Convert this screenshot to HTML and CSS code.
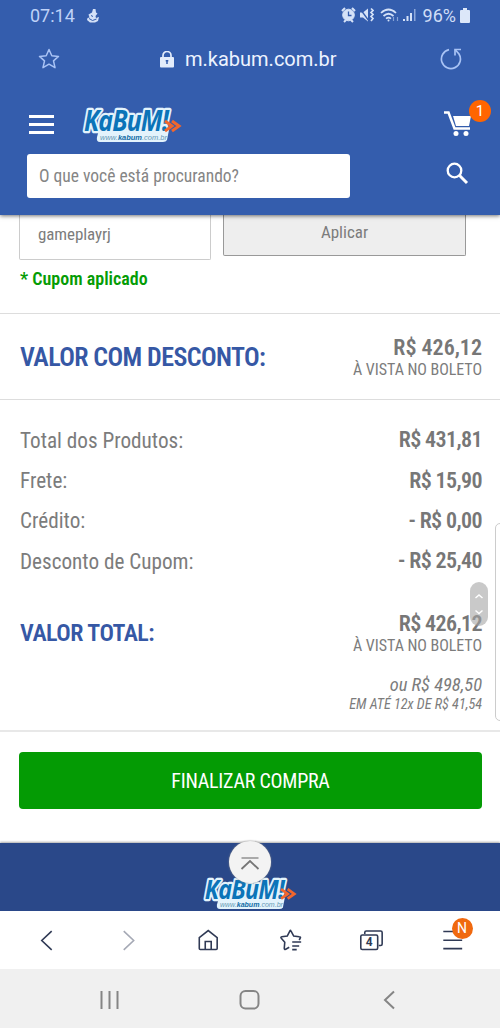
FILE: index.html
```html
<!DOCTYPE html>
<html lang="pt-BR">
<head>
<meta charset="utf-8">
<meta name="viewport" content="width=device-width">
<title>KaBuM! - Carrinho</title>
<link rel="stylesheet" href="styles.css">
</head>
<body>
<div class="phone">
  <header class="top">
    <div class="status">
      <span class="clock t">07:14</span>
      <svg class="anchor" width="14" height="15" viewBox="0 0 14 15"><path d="M7 1h2.500l.5 3.500 1.500 1L9.500 8l.5 2 3-1-1 4-3 1.500H4L1 12l.5-2 2-.5-1-3L6 4.500z" fill="#d3e0f7"/><path d="M3 10.500l3.500 2 4-1.500M5 7.500l2 1" stroke="#345dad" fill="none"/></svg>
      <div class="status-right">
        <svg width="33" height="16" viewBox="0 0 33 16" fill="none" stroke="#d5e2f8">
          <path d="M1 4l3-3M14 4l-3-3M3 15l2-2M12 15l-2-2" stroke-width="2"/><circle cx="7.500" cy="8" r="5.800" fill="#d5e2f8"/><path d="M7.500 4.500V8.500H10.500" stroke="#345dad" stroke-width="1.300"/>
          <path d="M19 5.500h3l5-4v13l-5-4h-3z" fill="#d5e2f8" stroke="none"/><path d="M18.500 1l9.500 13" stroke="#345dad" stroke-width="1.300"/><path d="M30 1.500l2 2-2 2 2 2-2 2 2 2-2 2.500" stroke-width="1.700"/>
        </svg>
        <svg class="wifi" width="20" height="15" viewBox="0 0 20 15" fill="none" stroke="#d5e2f8" stroke-width="1.700"><path d="M1 5q7.500-7 15 0M3.500 8q5-4.500 10 0M6 10.700q2.500-2 5 0"/><circle cx="8.500" cy="12.500" r="1" fill="#d5e2f8" stroke="none"/><path d="M13.500 9v4M17.500 13V9" stroke="#86a2d6" stroke-width="1.200"/></svg>
        <svg class="signal" width="14" height="14" viewBox="0 0 14 14" fill="#d5e2f8"><path d="M0 11h2v2H0zM3.500 8h2v5h-2zM7 5h2v8H7z"/><path d="M11 1h1.500v12H11z" fill="#8da8da"/></svg>
        <span class="battery-text t">96%</span>
        <svg class="battery" width="10" height="15" viewBox="0 0 10 15"><path d="M3 0h4v2h2q1 0 1 1v11q0 1-1 1H1q-1 0-1-1V3q0-1 1-1h2z" fill="#dce7f9"/></svg>
      </div>
    </div>
    <div class="address">
      <svg class="fav" width="22" height="22" viewBox="0 0 22 22"><path d="M11 1.500l2.800 6.200 6.700.7-5 4.500 1.500 6.800-6-3.500-6 3.500 1.500-6.800-5-4.500 6.700-.7z" fill="none" stroke="#a9c3f5" stroke-width="1.500" stroke-linejoin="round"/></svg>
      <svg class="lock" width="14" height="17" viewBox="0 0 14 17"><rect y="6" width="14" height="10.500" rx="1" fill="#e3ecfb"/><path d="M3 7V4.500a4 4 0 018 0V7" fill="none" stroke="#e3ecfb" stroke-width="1.700"/><path d="M7 9v4M5.700 9.700h2.600" stroke="#345dad" stroke-width="1.500"/></svg>
      <span class="url t">m.kabum.com.br</span>
      <svg class="reload" width="22" height="22" viewBox="0 0 22 22" fill="none" stroke="#a9c3f5" stroke-width="1.700"><path d="M9 1.700A9.500 9.500 0 1 0 19 6L15.500 2"/><path d="M21 1.500h-6v6"/></svg>
    </div>
    <div class="brand">
      <svg class="menu" width="25" height="20" viewBox="0 0 25 20" fill="#fff"><path d="M0 0h25v3H0zM0 8h25v3H0zM0 16h25v3H0z"/></svg>
      <svg class="logo" width="102" height="38" viewBox="0 0 102 38">
        <path d="M18 25H88L86 35Q85 37 82 37H19Q15 37 16 32Z" fill="#e3f3fc"/>
        <text class="logo-name" x="3" y="26" textLength="84" lengthAdjust="spacingAndGlyphs">KaBuM!</text>
        <path class="arrow" d="M84 16l7 5-7 5M91 16l7 5-7 5"/>
        <text class="logo-url" x="19" y="34.500" textLength="67" lengthAdjust="spacingAndGlyphs">www.<tspan class="logo-url-bold">kabum</tspan>.com.br</text>
      </svg>
      <div class="cart">
        <svg width="28" height="26" viewBox="0 0 28 26"><path d="M0 1.500h4.500l6 16H26" fill="none" stroke="#fff" stroke-width="2.500"/><path d="M9 5H27l-2 10H12z" fill="#fff"/><circle cx="12" cy="22.500" r="2.500" fill="#fff"/><circle cx="22" cy="22.500" r="2.500" fill="#fff"/></svg>
        <span class="cart-badge">1</span>
      </div>
    </div>
    <div class="search">
      <div class="search-box"><span class="t">O que você está procurando?</span></div>
      <svg class="search-icon" width="23" height="23" viewBox="0 0 23 23" fill="none" stroke="#fff"><circle cx="8.500" cy="8.500" r="6.800" stroke-width="2.300"/><path d="M13.300 13.300l7.700 7.700" stroke-width="3"/></svg>
    </div>
  </header>
  <main>
    <section class="coupon">
      <div class="coupon-form">
        <div class="coupon-input"><span class="t">gameplayrj</span></div>
        <div class="coupon-button"><span class="t">Aplicar</span></div>
      </div>
      <p class="coupon-note"><span class="t">* Cupom aplicado</span></p>
    </section>
    <section class="discount">
      <h2 class="discount-title t">VALOR COM DESCONTO:</h2>
      <div class="amount">
        <strong class="price main-price t">R$ 426,12</strong>
        <span class="terms t">À VISTA NO BOLETO</span>
      </div>
    </section>
    <section class="summary">
      <div class="row"><span class="t">Total dos Produtos:</span><strong class="price t">R$ 431,81</strong></div>
      <div class="row"><span class="t">Frete:</span><strong class="price t">R$ 15,90</strong></div>
      <div class="row"><span class="t">Crédito:</span><strong class="price t">- R$ 0,00</strong></div>
      <div class="row"><span class="t">Desconto de Cupom:</span><strong class="price t">- R$ 25,40</strong></div>
      <div class="total">
        <h2 class="total-title t">VALOR TOTAL:</h2>
        <div class="amount">
          <strong class="price t">R$ 426,12</strong>
          <span class="terms t">À VISTA NO BOLETO</span>
        </div>
      </div>
      <div class="installments">
        <em class="inst-total t">ou R$ 498,50</em>
        <em class="inst-terms t">EM ATÉ 12x DE R$ 41,54</em>
      </div>
    </section>
    <div class="checkout"><div class="checkout-button"><span class="t">FINALIZAR COMPRA</span></div></div>
  </main>
  <footer class="footer">
    <svg width="96" height="36" viewBox="0 0 102 38" preserveAspectRatio="none">
      <path d="M18 25H88L86 35Q85 37 82 37H19Q15 37 16 32Z" fill="#e3f3fc"/>
      <text class="logo-name" x="3" y="26" textLength="84" lengthAdjust="spacingAndGlyphs">KaBuM!</text>
      <path class="arrow" d="M84 16l7 5-7 5M91 16l7 5-7 5"/>
      <text class="logo-url" x="19" y="34.500" textLength="67" lengthAdjust="spacingAndGlyphs">www.<tspan class="logo-url-bold">kabum</tspan>.com.br</text>
    </svg>
  </footer>
  <nav class="toolbar">
    <svg width="82" height="58" viewBox="0 0 82 58"><path d="M51 20l-10 9.500 10 9.500" /></svg>
    <svg class="dim" width="82" height="58" viewBox="0 0 82 58"><path d="M41 20l10 9.500-10 9.500"/></svg>
    <svg width="82" height="58" viewBox="0 0 82 58"><path d="M35.500 26.500L44.500 19.500l9 7v11q0 1-1 1h-16q-1 0-1-1zM41.500 38.500v-8h6v8"/></svg>
    <svg width="82" height="58" viewBox="0 0 82 58"><path d="M53.500 29l1-1.700q1-1.300-1-1.500l-5.500-.8-2.800-5.200q-.5-1-1 0L41.500 25l-5.500.8q-1.500.3-.5 1.500l3.500 4-.5 6q0 1.500 1.500 1l3.500-2M46.500 31h9M46.500 35h7M46.500 38.700h4.500"/></svg>
    <svg width="82" height="58" viewBox="0 0 82 58"><rect x="34" y="24" width="17" height="14.500" rx="1.500"/><path d="M38 23v-1.500q0-1.500 1.500-1.500h14.500q1.500 0 1.500 1.500V33q0 1.500-1.500 1.500h-2"/><text x="42.500" y="35.500" text-anchor="middle">4</text></svg>
    <div class="more">
      <svg width="82" height="58" viewBox="0 0 82 58"><path d="M34.500 20.500h19M34.500 29.200h19M34.500 37.700h19"/></svg>
      <span class="more-badge">N</span>
    </div>
  </nav>
  <nav class="system">
    <svg width="140" height="58" viewBox="0 0 140 58"><path d="M61.500 22v18M69.500 22v18M77.500 22v18"/></svg>
    <svg width="140" height="58" viewBox="0 0 140 58"><rect x="60.500" y="22" width="18" height="17.500" rx="5"/></svg>
    <svg width="140" height="58" viewBox="0 0 140 58"><path d="M74 22.500l-9 8.500 9 8.500"/></svg>
  </nav>
  <div class="edge-panel"></div>
  <svg class="scroll-handle" width="18" height="44" viewBox="0 0 18 44" fill="none" stroke="#fff" stroke-width="1.500"><path d="M5.500 16l3.500-3 3.500 3M5.500 28.500l3.500 3 3.500-3"/></svg>
  <svg class="to-top" width="42" height="42" viewBox="0 0 42 42" fill="none" stroke="#777" stroke-width="1.800"><path d="M12.500 17h17" stroke="#aaa"/><path d="M12.500 28l8.500-8 8.500 8"/></svg>
</div>
</body>
</html>
```
FILE: styles.css
```css
* { box-sizing: border-box; }
body { margin: 0; background: #fff; font-family: "Roboto Condensed", Roboto, sans-serif; font-stretch: condensed; color: #7c7c7c; }
h2, p { margin: 0; }
svg { display: block; flex: none; }
.t { display: block; white-space: nowrap; }
.phone { position: relative; width: 500px; height: 1028px; overflow: hidden; display: flex; flex-direction: column; }

.top { position: relative; z-index: 1; height: 215px; flex: none; background: #345dad; box-shadow: 0 1px 4px rgba(0,0,0,.55); font-stretch: normal; }
.status { height: 32px; display: flex; align-items: center; padding: 0 30px 2px; color: #bfd2f8; font-family: Roboto, sans-serif; font-size: 18px; }
.anchor { margin-left: 11px; }
.status-right { margin-left: auto; display: flex; align-items: center; }
.wifi { margin-left: 6px; }
.signal { margin-left: 3px; }
.battery-text { margin-left: 6px; color: #d0def7; }
.battery { margin-left: 4px; }
.address { height: 56px; display: flex; align-items: center; padding: 0 38px; font-family: Roboto, sans-serif; }
.fav, .reload { margin-bottom: 2px; }
.lock { margin-left: 100px; margin-bottom: 2px; }
.url { margin-left: 11px; color: #edf3ff; font-size: 20px; margin-bottom: 2px; }
.reload { margin-left: auto; }
.brand { height: 66px; display: flex; align-items: flex-start; padding: 17px 28px 0 29px; }
.menu { margin-top: 10px; }
.logo { margin-left: 27px; overflow: visible; }
.logo-name { font: italic 700 29px "Open Sans", sans-serif; letter-spacing: -1px; fill: #0b74b8; stroke: #e3f3fc; stroke-width: 4.5px; stroke-linejoin: round; paint-order: stroke; }
.logo-url { font: italic 8px "Liberation Sans", sans-serif; fill: #6699b5; }
.logo-url-bold { font-weight: bold; fill: #126ca5; }
.arrow { fill: none; stroke: #f2662c; stroke-width: 3px; }
.cart { position: relative; margin: 6px 0 0 auto; }
.cart-badge { position: absolute; left: 25px; top: -11px; width: 22px; height: 22px; border-radius: 50%; background: #ff6500; color: #fff; font: 15px/22px Roboto, sans-serif; text-align: center; }
.search { display: flex; justify-content: space-between; padding: 0 31px 0 27px; }
.search-box { width: 323px; height: 44px; border-radius: 3px; background: #fff; padding-left: 12px; display: flex; align-items: center; font-size: 17.5px; font-stretch: condensed; color: #858585; }
.search-icon { margin-top: 8px; }

.coupon { height: 99px; padding: 0 19px; border-bottom: 1px solid #ddd; }
.coupon-form { display: flex; align-items: flex-start; gap: 12px; }
.coupon-input { width: 192px; height: 45px; border: 1px solid #ccc; border-top: 0; border-radius: 0 0 2px 2px; padding: 9px 0 0 18px; font-size: 17px; line-height: 20px; letter-spacing: -.1px; }
.coupon-button { width: 243px; height: 41px; border: 1px solid #999; border-top: 0; border-radius: 0 0 2px 2px; background: #eee; display: flex; justify-content: center; padding-top: 7px; font-size: 17px; line-height: 20px; }
.coupon-note { margin: 8px 0 0; padding-left: 1px; font-size: 18px; line-height: 22px; font-weight: 600; color: #059c05; }
.discount { height: 86px; padding: 1px 18px 0 20px; display: flex; justify-content: space-between; align-items: center; border-bottom: 1px solid #ddd; }
.discount-title, .total-title { font-weight: 600; font-size: 26px; line-height: 30px; letter-spacing: -.6px; color: #3658a5; }
.amount { display: flex; flex-direction: column; align-items: flex-end; }
.price { font-size: 22px; line-height: 26px; font-weight: 600; letter-spacing: -.6px; color: #777; }
.main-price { letter-spacing: 0; }
.terms { font-size: 16px; line-height: 18px; letter-spacing: -.05px; }
.summary { height: 332px; padding: 20px 18px 0 20px; border-bottom: 2px solid #e8e8e8; }
.row { height: 40.4px; display: flex; align-items: center; justify-content: space-between; font-size: 21.2px; }
.total { display: flex; justify-content: space-between; align-items: center; margin-top: 29px; }
.total-title { font-size: 24px; letter-spacing: -.5px; }
.installments { display: flex; flex-direction: column; align-items: flex-end; margin-top: 20px; }
.inst-total { font-size: 18.5px; line-height: 20px; }
.inst-terms { font-size: 14.2px; line-height: 18px; }
.checkout { height: 111px; padding: 20px 18px 0 19px; }
.checkout-button { height: 57px; border-radius: 4px; background: #049b04; color: #fff; display: flex; align-items: center; justify-content: center; font-size: 20px; letter-spacing: -.25px; }
.footer { height: 68px; flex: none; background: #2a4889; display: flex; justify-content: center; padding-top: 31px; box-shadow: 0 -1px 2px #aaa; }
.footer svg { overflow: visible; }
.toolbar { height: 58px; flex: none; background: #fff; display: flex; padding-left: 1px; }
.toolbar svg { fill: none; stroke: #303a55; stroke-width: 1.6; width: 81.500px; }
.toolbar .dim { stroke: #a5a9b5; }
.toolbar text { font: bold 12px Roboto, sans-serif; fill: #303a55; stroke: none; }
.more { position: relative; }
.more-badge { position: absolute; left: 43px; top: 7px; width: 21px; height: 21px; border-radius: 50%; background: #f0690f; color: #fff; font: 14px/21px Roboto, sans-serif; text-align: center; }
.system { height: 59px; flex: none; background: #f0f0f0; display: flex; justify-content: center; }
.system svg { fill: none; stroke: #858585; stroke-width: 2; }
.edge-panel { position: absolute; left: 495px; top: 523px; width: 12px; height: 198px; border: 1px solid #ccc; border-radius: 5px; background: #fff; }
.scroll-handle { position: absolute; left: 470px; top: 582px; border-radius: 9px; background: rgba(165,165,165,.6); }
.to-top { position: absolute; left: 229px; top: 841px; z-index: 2; border-radius: 50%; background: #f3f3f3; box-shadow: 0 0 2px #888; }
```
